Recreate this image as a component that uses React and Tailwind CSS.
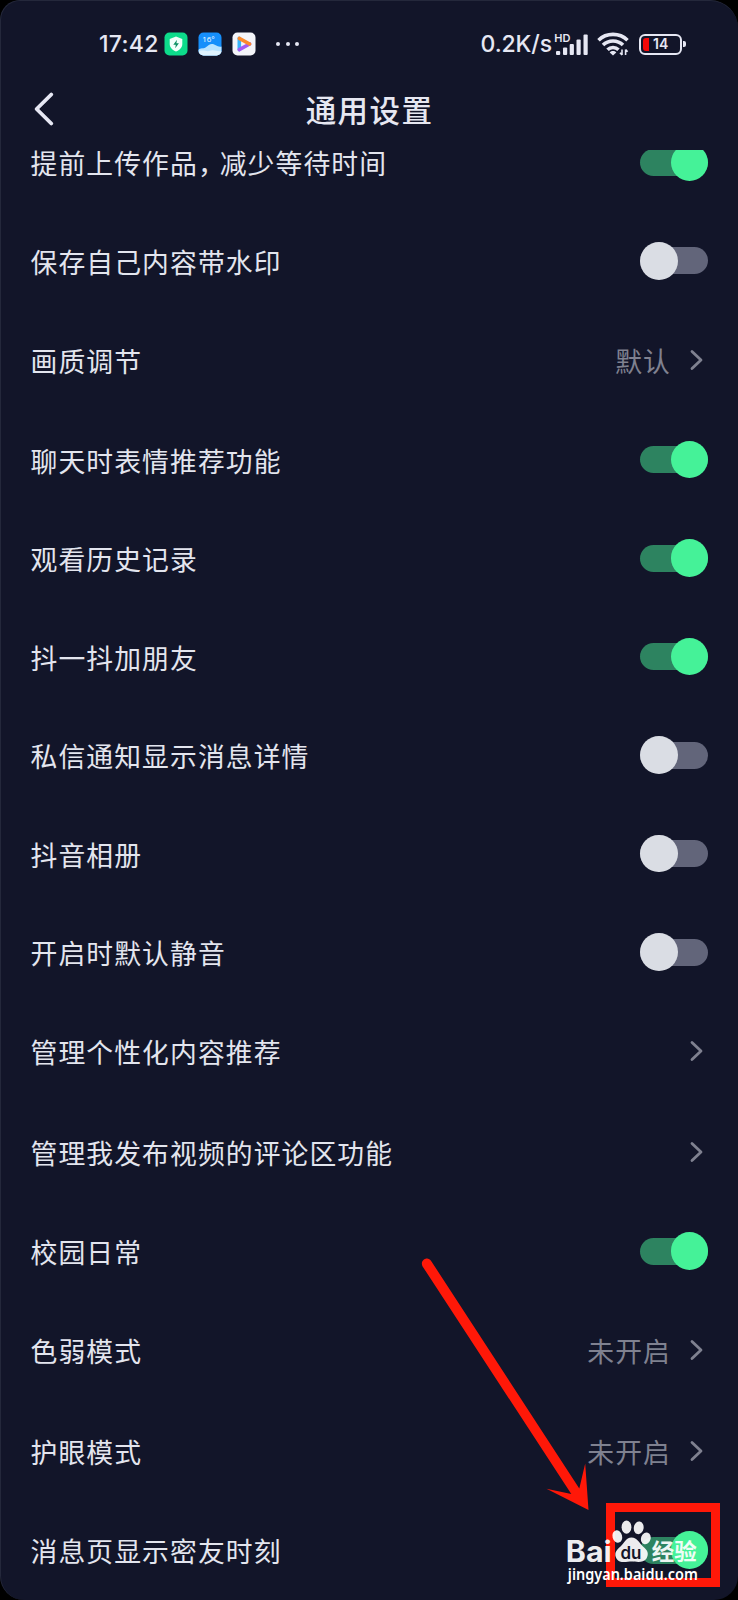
import clsx from 'clsx';

const rows = [
  { label: '提前上传作品，减少等待时间', type: 'switch', on: true },
  { label: '保存自己内容带水印', type: 'switch', on: false },
  { label: '画质调节', type: 'link', value: '默认' },
  { label: '聊天时表情推荐功能', type: 'switch', on: true },
  { label: '观看历史记录', type: 'switch', on: true },
  { label: '抖一抖加朋友', type: 'switch', on: true },
  { label: '私信通知显示消息详情', type: 'switch', on: false },
  { label: '抖音相册', type: 'switch', on: false },
  { label: '开启时默认静音', type: 'switch', on: false },
  { label: '管理个性化内容推荐', type: 'link' },
  { label: '管理我发布视频的评论区功能', type: 'link' },
  { label: '校园日常', type: 'switch', on: true },
  { label: '色弱模式', type: 'link', value: '未开启' },
  { label: '护眼模式', type: 'link', value: '未开启' },
  { label: '消息页显示密友时刻', type: 'switch', on: true },
];

const Switch = ({ on }) => (
  <div className={clsx('flex h-[27px] w-[68px] items-center rounded-full', on ? 'justify-end bg-[#2d8360]' : 'justify-start bg-[#62657a]')}>
    <div className={clsx('size-[37.5px] shrink-0 rounded-full', on ? 'bg-[#45f298]' : 'bg-[#dadde4]')} />
  </div>
);

const Chevron = () => (
  <svg width="13" height="22" viewBox="0 0 13 22" fill="none" stroke="#7f8190" strokeWidth="2.8" strokeLinecap="round" strokeLinejoin="round">
    <path d="M2 2.4L11 11L2 19.6" />
  </svg>
);

// full-width comma is set a little tighter than the other characters
const Label = ({ text }) => {
  const [head, tail] = text.split('，');
  return (
    <span className="pt-[2px] text-[26.8px] leading-[40px] tracking-[1.1px] text-[#e3e5ee] whitespace-nowrap">
      {head}
      {tail && <span className="tracking-[-5px]">，</span>}
      {tail}
    </span>
  );
};

const Row = ({ row }) => (
  <div className={clsx('flex shrink-0 items-center justify-between pl-[29.5px] pr-[30px]', row.type === 'switch' ? 'h-[98.5px]' : 'h-[100.25px]')}>
    <Label text={row.label} />
    {row.type === 'switch' ? (
      <Switch on={row.on} />
    ) : (
      <div className="flex items-center gap-[19px] pr-[5px]">
        {row.value && <span className="pt-[2px] text-[26.8px] leading-[40px] tracking-[1.1px] text-[#7f8190]">{row.value}</span>}
        <Chevron />
      </div>
    )}
  </div>
);

const StatusBar = () => (
  <div className="flex h-[86px] shrink-0 items-center justify-between pl-[98px] pr-[52px] text-[#e6e7f3]">
    <div className="flex items-center">
      <span className="w-[65px] font-['Inter'] text-[23px] font-medium leading-none tracking-[0.3px] whitespace-nowrap">17:42</span>
      <svg width="24" height="24" viewBox="0 0 24 24">
        <rect x="0.5" y="0.5" width="23" height="23" rx="5" fill="#0ddc8b" />
        <path d="M12 4.6L18.3 7V12C18.3 15.6 15.6 18.2 12 19.5C8.4 18.2 5.7 15.6 5.7 12V7Z" fill="#f1fffa" />
        <path d="M13 7.8L9.3 12.8H11.8L11.2 16.2L14.9 11.2H12.4Z" fill="#0b8f62" />
      </svg>
      <svg className="ml-[10px]" width="24" height="24" viewBox="0 0 24 24">
        <defs>
          <clipPath id="weather"><rect x="0.5" y="0.5" width="23" height="23" rx="5" /></clipPath>
        </defs>
        <g clipPath="url(#weather)">
          <rect width="24" height="24" fill="#168ffb" />
          <path d="M0 18C3 15.5 5 17 7.5 15.5C10.5 13.2 12 11.4 15 12C18 12.6 19 15.5 24 14.5V24H0Z" fill="#b9e3ff" />
          <path d="M0 20C5 16.5 8 20.5 12 18.8C16 17 18 20 24 19V24H0Z" fill="#dff3ff" />
          <text x="4.2" y="10.3" fontSize="8" fontFamily="Open Sans" fill="#fff">16°</text>
        </g>
      </svg>
      <svg className="ml-[10px]" width="24" height="24" viewBox="0 0 24 24">
        <rect x="0.5" y="0.5" width="23" height="23" rx="5" fill="#f4f5fa" />
        <path d="M7.3 6.4V17.6" stroke="#36b4fb" strokeWidth="3.6" strokeLinecap="round" />
        <path d="M7.3 17.6L17.6 12" stroke="#a45bf0" strokeWidth="3.6" strokeLinecap="round" />
        <path d="M7.3 6.4L17.6 12" stroke="#fb8a2d" strokeWidth="3.6" strokeLinecap="round" />
      </svg>
      <div className="ml-[20px] flex gap-[5.5px]">
        <i className="size-[4px] rounded-full bg-[#e6e7f3]" />
        <i className="size-[4px] rounded-full bg-[#e6e7f3]" />
        <i className="size-[4px] rounded-full bg-[#e6e7f3]" />
      </div>
    </div>
    <div className="flex items-center">
      <span className="w-[72.5px] font-['Inter'] text-[23px] font-medium leading-none tracking-[-0.1px] whitespace-nowrap">0.2K/s</span>
      <svg width="38" height="26" viewBox="0 0 38 26" fill="#e6e7f3">
        <text x="1.2" y="11" fontSize="11" fontWeight="600" fontFamily="Inter">HD</text>
        <rect x="3" y="20" width="4.2" height="4" rx="1" />
        <rect x="10" y="16.5" width="4.2" height="7.5" rx="1" />
        <rect x="16.7" y="13" width="4.2" height="11" rx="1" />
        <rect x="23.5" y="8.5" width="4.2" height="15.5" rx="1" />
        <rect x="30.5" y="3.5" width="4.2" height="20.5" rx="1" />
      </svg>
      <svg className="ml-[6px]" width="33" height="26" viewBox="0 0 33 26" fill="none" stroke="#e6e7f3" strokeWidth="3.6">
        <path d="M1.5 9.2C9.5 1.4 22.5 1.4 30.5 9.2" />
        <path d="M6 14C11.5 8.6 20.5 8.6 26 14" />
        <path d="M10.5 18.7C13.6 15.7 18.4 15.7 21.5 18.7" />
        <path d="M16 24.4L12.7 21.4C14.5 19.6 17.5 19.6 19.3 21.4Z" fill="#e6e7f3" stroke="none" />
        <path d="M25 18.5V24M23 21.8L25 24M28.6 24V18.5M30.6 20.8L28.6 18.5" strokeWidth="1.6" />
      </svg>
      <div className="ml-[9px] flex items-center">
        <div className="flex h-[21px] w-[43px] items-center rounded-[6px] border-2 border-[#e6e7f3] pl-[2px]">
          <div className="h-[13px] w-[6px] rounded-l-[3px] bg-[#f40808]" />
          <span className="ml-[4px] font-['Inter'] text-[14px] font-semibold leading-none">14</span>
        </div>
        <div className="ml-[1px] h-[6px] w-[3px] rounded-r-[2px] bg-[#e6e7f3]" />
      </div>
    </div>
  </div>
);

const Header = () => (
  <div className="grid h-[63px] shrink-0 grid-cols-[1fr_auto_1fr] items-start">
    <svg className="ml-[32px] mt-[4px]" width="22" height="36" viewBox="0 0 22 36" fill="none" stroke="#e6e7f3" strokeWidth="3.8" strokeLinecap="round" strokeLinejoin="round">
      <path d="M18.3 3.5L3.6 18L18.3 32.5" />
    </svg>
    <h1 className="mt-[7px] text-[30.5px] font-medium leading-none tracking-[1.4px] text-[#e6e7f1]">通用设置</h1>
  </div>
);

const Arrow = () => (
  <svg className="absolute left-[399px] top-[1239px]" width="200" height="290" viewBox="0 0 200 290" fill="#ff1808">
    <path d="M31.3 21.2L179.3 248.5L185.2 223.6L188.5 270L146.5 248.8L171.3 254L22.6 26.4C19.3 20.4 27.7 15.2 31.3 21.2Z" />
  </svg>
);

const Watermark = () => (
  <svg className="absolute left-[560px] top-[1513px]" width="150" height="75" viewBox="0 0 150 75" fill="#fff">
    <g opacity="0.92">
      <text x="4.8" y="47.5" fontSize="29.5" fontWeight="700" fontFamily="Inter" textLength="46" lengthAdjust="spacingAndGlyphs">Bai</text>
      <ellipse cx="56.3" cy="22.5" rx="4.8" ry="6.3" transform="rotate(-15 56.3 22.5)" />
      <ellipse cx="65.5" cy="13.2" rx="4.9" ry="6.6" />
      <ellipse cx="77.7" cy="13.8" rx="4.9" ry="6.4" transform="rotate(10 77.7 13.8)" />
      <ellipse cx="84.8" cy="24.4" rx="4.8" ry="6" transform="rotate(20 84.8 24.4)" />
      <path d="M70.5 23.5C76.5 23.5 78 29 82 32.5C87 36.5 88 40 85.5 44.5C82 49.5 75 47.5 70.5 47.5C66 47.5 59 50 55.6 44.8C53 40 54.5 36.5 59.5 32.5C63.8 29 64.5 23.5 70.5 23.5Z" />
      <text x="59.5" y="44.5" fontSize="17" fontWeight="600" fontFamily="Inter" fill="#14162a" textLength="21" lengthAdjust="spacingAndGlyphs">du</text>
      <text x="90.7" y="46" fontSize="23" fontWeight="700" fontFamily="Noto Sans CJK SC" textLength="45" lengthAdjust="spacingAndGlyphs">经验</text>
    </g>
    <text x="6.8" y="65.5" fontSize="16.5" fontWeight="600" fontFamily="Noto Sans" textLength="130" lengthAdjust="spacingAndGlyphs">jingyan.baidu.com</text>
  </svg>
);

export default function App() {
  return (
    <div className="h-[1600px] w-[738px] overflow-hidden bg-black font-['Noto_Sans_CJK_SC',sans-serif]">
      <div className="relative flex h-full flex-col overflow-hidden rounded-b-[24px] rounded-tl-[20px] rounded-tr-[28px] border-l border-t border-[#24283b] bg-[#121529]">
        <StatusBar />
        <Header />
        <div className="flex min-h-0 flex-1 flex-col overflow-hidden">
          <div className="-mt-[37px] flex flex-col">
            {rows.map(row => <Row key={row.label} row={row} />)}
          </div>
        </div>
        <div className="absolute left-[605px] top-[1502px] h-[84px] w-[114px] border-[9px] border-[#ff1808]" />
        <Arrow />
        <Watermark />
      </div>
    </div>
  );
}
